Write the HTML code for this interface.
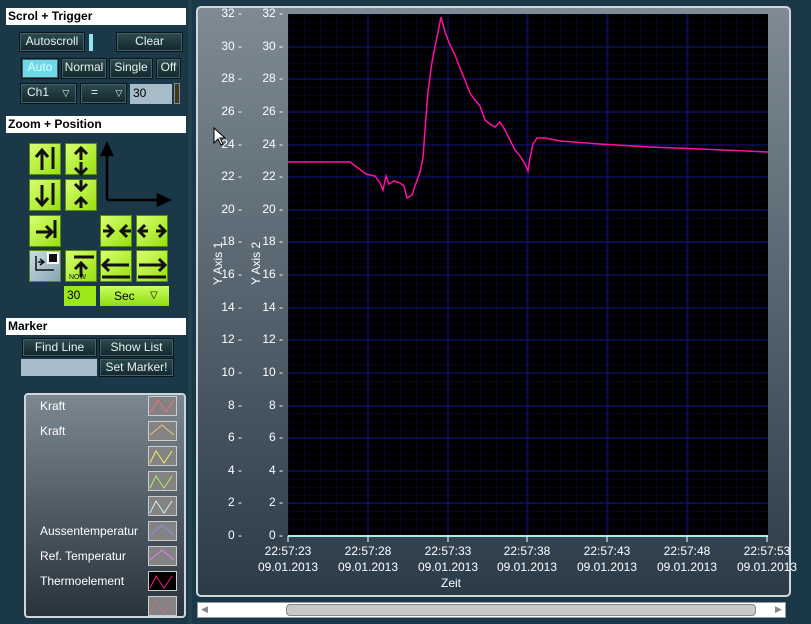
<!DOCTYPE html>
<html><head><meta charset="utf-8"><style>
*{margin:0;padding:0;box-sizing:border-box}
body{width:811px;height:624px;background:#1a3848;font-family:"Liberation Sans",sans-serif;position:relative;overflow:hidden}
.a{position:absolute}
.hdr{position:absolute;left:6px;width:180px;height:17px;background:#fff;font-weight:bold;font-size:12px;color:#000;padding:1px 2px}
.btn{position:absolute;background:linear-gradient(#2e4a50,#12272c);border:1px solid #0a1518;box-shadow:inset 0 0 0 1px #44606a;color:#e8f0f0;font-size:12px;text-align:center;line-height:17px;white-space:nowrap}
.g{position:absolute;width:32px;height:32px;background:linear-gradient(135deg,#d8ff70,#98e010);border:1px solid #5a8a10}
.leg{position:absolute;left:24px;top:393px;width:162px;height:225px;border:2px solid #cfd6da;border-radius:4px;background:linear-gradient(#7b8892,#28333c)}
.lt{position:absolute;left:14px;color:#fff;font-size:12px}
.yl{position:absolute;font-size:12px;color:#fff;text-align:right;width:24px}
</style></head><body>
<div class="a" style="left:188px;top:0;width:4px;height:624px;background:#23404e"></div>
<div class="hdr" style="top:8px">Scrol + Trigger</div>
<div class="btn" style="left:19px;top:32px;width:66px;height:20px">Autoscroll</div>
<div class="a" style="left:88px;top:33px;width:6px;height:19px;background:#8fe8f0;border:1px solid #234"></div>
<div class="btn" style="left:116px;top:32px;width:67px;height:20px">Clear</div>
<div class="btn" style="left:21px;top:58px;width:38px;height:21px;background:#6dd8e8;color:#e0ffff">Auto</div>
<div class="btn" style="left:61px;top:58px;width:46px;height:21px">Normal</div>
<div class="btn" style="left:109px;top:58px;width:44px;height:21px">Single</div>
<div class="btn" style="left:156px;top:58px;width:25px;height:21px">Off</div>
<div class="btn" style="left:20px;top:83px;width:57px;height:21px;text-align:left;padding-left:6px">Ch1 <span style="font-size:9px;margin-left:10px">▽</span></div>
<div class="btn" style="left:80px;top:83px;width:47px;height:21px;text-align:left;padding-left:10px">= <span style="font-size:9px;margin-left:14px">▽</span></div>
<div class="a" style="left:130px;top:84px;width:42px;height:20px;background:#a7bcc8;font-size:12px;padding:2px 3px">30</div>
<div class="a" style="left:174px;top:83px;width:6px;height:21px;background:#3c3a18;border:1px solid #888"></div>
<div class="hdr" style="top:116px">Zoom + Position</div>
<svg class="a" style="left:0;top:0" width="190" height="320">
<g stroke="#000" stroke-width="2.5" fill="#000">
<line x1="107" y1="200" x2="107" y2="150"/><polygon points="102,155 107,144 112,155"/>
<line x1="107" y1="200" x2="162" y2="200"/><polygon points="158,195 169,200 158,205"/>
</g></svg>
<div class="g" style="left:29px;top:143px"></div><div class="g" style="left:65px;top:143px"></div>
<div class="g" style="left:29px;top:179px"></div><div class="g" style="left:65px;top:179px"></div>
<div class="g" style="left:29px;top:215px"></div>
<div class="g" style="left:100px;top:215px"></div><div class="g" style="left:136px;top:215px"></div>
<div class="g" style="left:29px;top:250px;background:linear-gradient(135deg,#c8dce6,#8aa4b0)"></div>
<div class="g" style="left:65px;top:250px"></div>
<div class="g" style="left:100px;top:250px"></div><div class="g" style="left:136px;top:250px"></div>
<svg class="a" style="left:0;top:0" width="190" height="290" fill="none" stroke="#111" stroke-width="3">
<path d="M42 170V150M36 157l6-7 6 7M53 147v22"/>
<path d="M81 160v-12M75 154l6-6 6 6M81 162v12M75 168l6 6 6-6"/>
<path d="M42 185v20M36 198l6 7 6-7M53 183v22"/>
<path d="M81 180v10M75 184l6 6 6-6M81 208v-10M75 204l6-6 6 6"/>
<path d="M36 232h16M46 226l6 6-6 6M55 220v18"/>
<path d="M103 231h10M107 225l6 6-6 6M131 231h-10M127 225l-6 6 6 6"/>
<path d="M148 231h-9M145 225l-6 6 6 6M156 231h9M159 225l6 6-6 6"/>
<path d="M81 277v-14M75 269l6-6 6 6M74 257h20"/>
<path d="M103 265h26M109 259l-6 6 6 6M102 277h28"/>
<path d="M139 265h26M159 259l6 6-6 6M138 277h28"/>
<path d="M36 256v14h18M38 262h6M40 259l4 3-4 3" stroke-width="1.5"/>
</svg>
<div class="a" style="left:47px;top:252px;width:12px;height:12px;background:#111;border:2px solid #fff"></div>
<div class="a" style="left:69px;top:274px;font-size:7px;color:#111">NOW</div>
<div class="a" style="left:64px;top:286px;width:32px;height:20px;background:#9ae818;font-size:12px;padding:2px 3px">30</div>
<div class="a" style="left:100px;top:286px;width:69px;height:20px;background:linear-gradient(#c8ff60,#90dd10);font-size:12px;line-height:20px;padding-left:14px;white-space:nowrap">Sec<span class="a" style="left:50px;top:0;font-size:10px">▽</span></div>
<div class="hdr" style="top:318px">Marker</div>
<div class="btn" style="left:22px;top:338px;width:75px;height:19px">Find Line</div>
<div class="btn" style="left:99px;top:338px;width:75px;height:19px">Show List</div>
<div class="a" style="left:21px;top:359px;width:76px;height:17px;background:#a7bcc8"></div>
<div class="btn" style="left:99px;top:358px;width:75px;height:19px">Set Marker!</div>
<div class="leg">
<div class="lt" style="top:4px">Kraft</div><div class="lt" style="top:29px">Kraft</div>
<div class="lt" style="top:129px">Aussentemperatur</div><div class="lt" style="top:154px">Ref. Temperatur</div><div class="lt" style="top:179px">Thermoelement</div>
<svg class="a" style="left:122px;top:0" width="30" height="222" fill="none" stroke-width="1">
<g stroke="#ccc"><rect x=".5" y="1.5" width="28" height="19" fill="#838383"/><rect x=".5" y="26.5" width="28" height="19" fill="#838383"/><rect x=".5" y="51.5" width="28" height="19" fill="#838383"/><rect x=".5" y="76.5" width="28" height="19" fill="#838383"/><rect x=".5" y="101.5" width="28" height="19" fill="#838383"/><rect x=".5" y="126.5" width="28" height="19" fill="#838383"/><rect x=".5" y="151.5" width="28" height="19" fill="#838383"/><rect x=".5" y="176.5" width="28" height="19" fill="#000"/><rect x=".5" y="201.5" width="28" height="19" fill="#838383"/></g>
<path d="M2 18l8-13 8 12 8-12" stroke="#f07080"/><path d="M2 40l12-10 12 10" stroke="#f0c080"/><path d="M2 68l6-12 8 12 8-12" stroke="#f0f060"/><path d="M2 93l6-12 8 12 8-12" stroke="#b0f060"/><path d="M2 118l6-12 8 12 8-12" stroke="#d0f0f0"/><path d="M2 140l12-10 12 10" stroke="#8090f0"/><path d="M2 165l12-10 12 10" stroke="#e080f0"/><path d="M2 193l6-12 8 12 8-12" stroke="#ff1090"/><path d="M2 218l6-12 8 12 8-12" stroke="#c07080"/>
</svg></div>
<div class="a" style="left:196px;top:6px;width:595px;height:591px;border:2px solid #d0d6da;border-radius:5px;background:linear-gradient(#7e8b94,#2b3b48)"></div>
<svg class="a" style="left:0;top:0" width="811" height="624">
<defs><pattern id="mn" x="288" y="14" width="16" height="8.156" patternUnits="userSpaceOnUse"><path d="M0 0H16M0 0V9" stroke="#0a0a48" stroke-width="1"/></pattern></defs>
<rect x="288" y="14" width="480" height="522" fill="#000"/>
<rect x="288" y="14" width="480" height="522" fill="url(#mn)"/>
<g stroke="#14148a"><path d="M368 14V536M448 14V536M527 14V536M607 14V536M687 14V536"/>
<path d="M288 47H768M288 79H768M288 112H768M288 145H768M288 177H768M288 210H768M288 242H768M288 275H768M288 308H768M288 340H768M288 373H768M288 406H768M288 438H768M288 471H768M288 503H768"/></g>
<line x1="288" y1="536" x2="768" y2="536" stroke="#9ff0f0" stroke-width="2"/>
<polyline fill="none" stroke="#ff10a0" stroke-width="1.5" points="288,162 350,162 358,168 366,174 375,176 380,183 383,190 386,176 389,184 394,181 400,183 404,186 407,198 412,195 415,186 420,172 423,158 425,130 428,92 432,62 436,42 441,17 445,32 450,45 455,55 460,68 465,80 470,93 475,100 480,106 485,120 490,124 495,127 500,122 505,130 510,140 515,150 520,156 525,164 528,171 530,158 533,144 537,138 545,138 560,141 600,144 650,147 700,149 768,152"/>
<g stroke="#fff" stroke-width="1"><path d="M288 536v6M368 536v6M448 536v6M527 536v6M607 536v6M687 536v6M767 536v6"/></g>
</svg>
<div class="a" style="left:211px;top:285px;transform:rotate(-90deg);transform-origin:0 0;color:#fff;font-size:12px">Y Axis 1</div>
<div class="a" style="left:249px;top:285px;transform:rotate(-90deg);transform-origin:0 0;color:#fff;font-size:12px">Y Axis 2</div>
<div class="a" style="left:0;top:0">
<div class="yl" style="left:218px;top:6px">32 -</div><div class="yl" style="left:259px;top:6px">32 -</div>
<div class="yl" style="left:218px;top:39px">30 -</div><div class="yl" style="left:259px;top:39px">30 -</div>
<div class="yl" style="left:218px;top:71px">28 -</div><div class="yl" style="left:259px;top:71px">28 -</div>
<div class="yl" style="left:218px;top:104px">26 -</div><div class="yl" style="left:259px;top:104px">26 -</div>
<div class="yl" style="left:218px;top:137px">24 -</div><div class="yl" style="left:259px;top:137px">24 -</div>
<div class="yl" style="left:218px;top:169px">22 -</div><div class="yl" style="left:259px;top:169px">22 -</div>
<div class="yl" style="left:218px;top:202px">20 -</div><div class="yl" style="left:259px;top:202px">20 -</div>
<div class="yl" style="left:218px;top:234px">18 -</div><div class="yl" style="left:259px;top:234px">18 -</div>
<div class="yl" style="left:218px;top:267px">16 -</div><div class="yl" style="left:259px;top:267px">16 -</div>
<div class="yl" style="left:218px;top:300px">14 -</div><div class="yl" style="left:259px;top:300px">14 -</div>
<div class="yl" style="left:218px;top:332px">12 -</div><div class="yl" style="left:259px;top:332px">12 -</div>
<div class="yl" style="left:218px;top:365px">10 -</div><div class="yl" style="left:259px;top:365px">10 -</div>
<div class="yl" style="left:218px;top:398px">8 -</div><div class="yl" style="left:259px;top:398px">8 -</div>
<div class="yl" style="left:218px;top:430px">6 -</div><div class="yl" style="left:259px;top:430px">6 -</div>
<div class="yl" style="left:218px;top:463px">4 -</div><div class="yl" style="left:259px;top:463px">4 -</div>
<div class="yl" style="left:218px;top:495px">2 -</div><div class="yl" style="left:259px;top:495px">2 -</div>
<div class="yl" style="left:218px;top:528px">0 -</div><div class="yl" style="left:259px;top:528px">0 -</div>
</div>
<div class="a" style="top:543px;left:0;color:#fff;font-size:12px;line-height:16px;text-align:center">
<div class="a" style="left:253px;width:70px">22:57:23<br>09.01.2013</div>
<div class="a" style="left:333px;width:70px">22:57:28<br>09.01.2013</div>
<div class="a" style="left:413px;width:70px">22:57:33<br>09.01.2013</div>
<div class="a" style="left:492px;width:70px">22:57:38<br>09.01.2013</div>
<div class="a" style="left:572px;width:70px">22:57:43<br>09.01.2013</div>
<div class="a" style="left:652px;width:70px">22:57:48<br>09.01.2013</div>
<div class="a" style="left:732px;width:70px">22:57:53<br>09.01.2013</div>
<div class="a" style="left:426px;top:32px;width:50px">Zeit</div>
</div>
<div class="a" style="left:197px;top:602px;width:589px;height:16px;background:#fff;border:1px solid #999"></div>
<div class="a" style="left:286px;top:604px;width:470px;height:12px;background:#c8c8c8;border:1px solid #888;border-radius:4px"></div>
<div class="a" style="left:201px;top:604px;font-size:9px;color:#888">◀</div>
<div class="a" style="left:775px;top:604px;font-size:9px;color:#888">▶</div>
<svg class="a" style="left:213px;top:127px" width="14" height="20"><path d="M1 1v15l4-4 3 6 2-1-3-6h5z" fill="#fff" stroke="#000"/></svg>
</body></html>
